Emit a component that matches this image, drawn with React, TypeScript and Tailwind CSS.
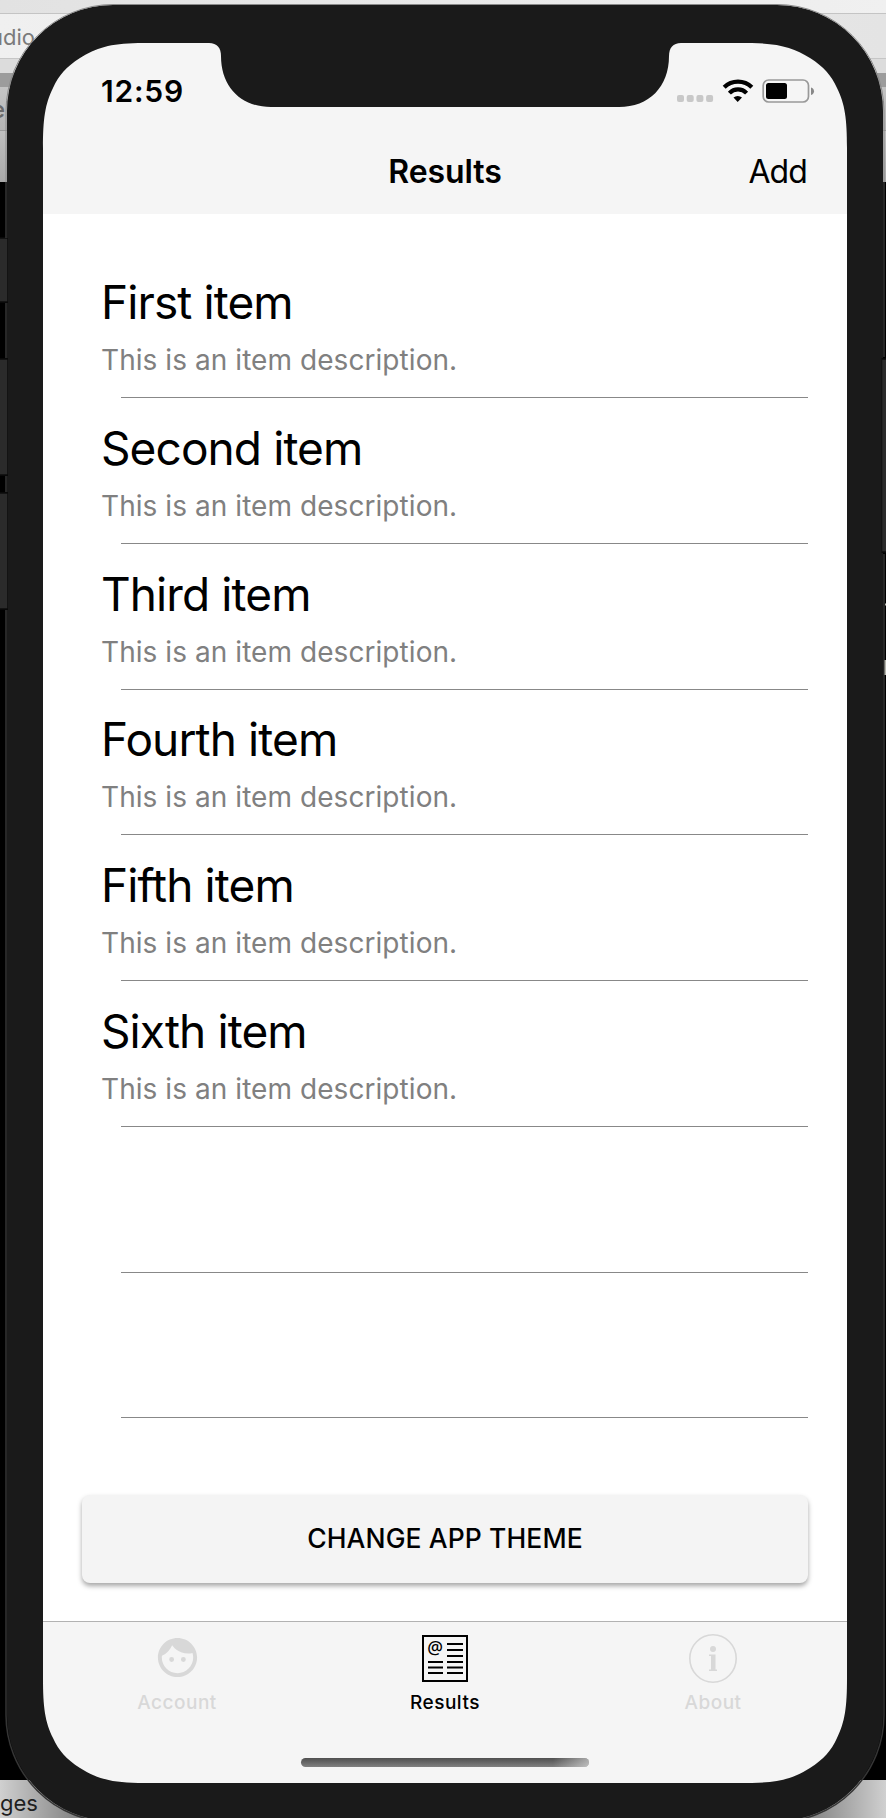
import React from "react";
import { MdFace } from "react-icons/md";

const items = ["First item", "Second item", "Third item", "Fourth item", "Fifth item", "Sixth item", "", ""];

function Desktop() {
  return (
    <div className="absolute inset-0 flex flex-col overflow-hidden bg-black text-[#7b7b7b]">
      <div className="h-[14px] shrink-0 border-b border-[#c4c4c4] bg-linear-to-r from-[#e2e2e2] to-[#f0f0f0]" />
      <div className="flex h-[45px] shrink-0 items-center border-b border-[#c6c6c6] bg-linear-to-r from-[#f0f0f0] to-[#e4e4e4]">
        <span className="-ml-[10px] pt-[2px] text-[22px] leading-none">udio</span>
      </div>
      <div className="h-[14px] shrink-0 bg-[#dcdcdc]" />
      <div className="h-[14px] shrink-0 bg-[#9c9c9c]" />
      <div className="flex h-[44px] shrink-0 items-center border-b border-[#9a9a9a] bg-linear-to-b from-[#c4c4c4] to-[#b5b5b5]">
        <span className="-ml-[9px] pt-[3px] text-[24px] font-medium leading-none text-[#6a6a6a]">e</span>
      </div>
      <div className="h-[51px] shrink-0 bg-linear-to-b from-[#c0c0c0] to-[#a8a8a8]" />
      <div className="grow" />
      <div className="flex h-[38px] shrink-0 items-center justify-between bg-[#777777] text-[#1f1f1f]">
        <div className="flex h-full w-[90px] items-center bg-linear-to-r from-[#d0d0d0] to-[#777777]">
          <span className="pt-[7px] text-[22px] leading-none">ges</span>
        </div>
        <div className="h-full w-[90px] bg-linear-to-l from-[#d0d0d0] to-[#777777]" />
      </div>
    </div>
  );
}

function Bezel() {
  return (
    <svg className="pointer-events-none absolute inset-0" width="886" height="1818" viewBox="0 0 886 1818">
      <g fill="#2b2b2b" stroke="#0c0c0c" strokeWidth="1.5">
        <rect x="-4" y="238" width="12" height="64" />
        <rect x="-4" y="359" width="12" height="116" />
        <rect x="-4" y="493" width="12" height="116" />
        <rect x="881.5" y="359" width="14" height="193" />
      </g>
      <path
        fill="#1a1a1a"
        fillRule="evenodd"
        d="M113 5H777A106 106 0 0 1 883 111V358H881.500V553H883V1715A106 106 0 0 1 777 1821H113A106 106 0 0 1 7 1715V610H8V492H7V476H8V358H7V303H8V238H7V111A106 106 0 0 1 113 5Z
        M138 43C110 43.500 96 48 80 58C66 67 59 75 53 88C45 104 43 119 43 148V1678C43 1707 45 1722 53 1738C59 1751 66 1759 80 1768C96 1778 110 1782.500 138 1783H752C780 1782.500 794 1778 810 1768C824 1759 831 1751 837 1738C845 1722 847 1707 847 1678V148C847 119 845 104 837 88C831 75 824 67 810 58C794 48 780 43.500 752 43H681C673 43 669 48 669 56C669 87 649 107 619 107H271C241 107 221 87 221 56C221 48 217 43 209 43Z"
      />
      <path
        fill="none"
        stroke="#353535"
        strokeWidth="1.5"
        d="M6 238V182M6 303V358M6 476V492M6 610V1715A107 107 0 0 0 113 1822H777A107 107 0 0 0 884 1715V554M884 357V182"
      />
      <path
        fill="none"
        stroke="#8a8a8a"
        strokeWidth="1"
        d="M6 182V111A107 107 0 0 1 113 4.500H777A107 107 0 0 1 884 111V182"
      />
      <path d="M885 604.500H886M885.500 660V675" stroke="#b5b5ac" strokeWidth="2" />
    </svg>
  );
}

function StatusIcons() {
  return (
    <svg width="140" height="28" viewBox="676 77 140 28">
      <g fill="#c8c8c8">
        <rect x="677" y="95" width="7" height="7" rx="2" />
        <rect x="686.700" y="95" width="7" height="7" rx="2" />
        <rect x="696.400" y="95" width="7" height="7" rx="2" />
        <rect x="706.100" y="95" width="7" height="7" rx="2" />
      </g>
      <g fill="none" stroke="#000" strokeWidth="4.2">
        <path d="M724.200 87.300A19.500 19.500 0 0 1 751.800 87.300" />
        <path d="M729.400 93.100A12 12 0 0 1 746.600 93.100" />
      </g>
      <path d="M733.500 97.600A6.500 6.500 0 0 1 742 97.600L737.700 102Z" />
      <rect x="763.200" y="80" width="45.300" height="22" rx="5.500" fill="none" stroke="#999" strokeWidth="1.700" />
      <rect x="766" y="83" width="21" height="16" rx="2.500" />
      <path d="M811 87.500Q814 88.500 814 91.200Q814 94 811 95Z" fill="#888" />
    </svg>
  );
}

function ResultsIcon() {
  return (
    <svg className="-ml-px" width="46" height="47" viewBox="0 0 46 47">
      <rect x="1" y="1" width="44" height="45" fill="none" stroke="#000" strokeWidth="2" />
      <text x="5.300" y="19" fontSize="17.500" fontWeight="500" fontFamily="Noto Sans, sans-serif">@</text>
      <path
        stroke="#000"
        strokeWidth="2"
        d="M25 9H41M25 15H41M25 21H41M6 27H21M25 27H41M6 32.500H21M25 32.500H41M6 38H21M25 38H41"
      />
    </svg>
  );
}

function InfoIcon() {
  return (
    <svg width="48" height="49" viewBox="0 0 48 49" fill="#d8d8d8">
      <ellipse cx="24" cy="24.500" rx="23.200" ry="23.700" fill="none" stroke="#d8d8d8" strokeWidth="1.600" />
      <circle cx="24" cy="15" r="3" />
      <path d="M20 20.500H26.500V35.500H28V37H20V35.500H22V22H20Z" />
    </svg>
  );
}

function Tab({ label, active, children }: { label: string; active?: boolean; children: React.ReactNode }) {
  return (
    <div className={`flex w-[268px] flex-col items-center ${active ? "text-black" : "text-[#d8d8d8]"}`}>
      <div className="flex h-[74px] items-center justify-center pb-[2px]">{children}</div>
      <span className="text-[19px] font-medium leading-[14px] tracking-[0.5px]">{label}</span>
    </div>
  );
}

export default function App() {
  return (
    <div className="relative h-[1818px] w-[886px] overflow-hidden font-[Inter,sans-serif] [font-variant-ligatures:none]">
      <Desktop />
      <div className="relative ml-[42px] flex h-[1784px] w-[806px] flex-col bg-white px-px pt-[43px] text-black [clip-path:inset(42px_0_0_0_round_78px)]">
        <header className="-mx-px flex h-[171px] shrink-0 flex-col bg-[#f5f5f5] px-px">
          <div className="flex h-[86px] items-center justify-between pl-[58px] pr-[31px] pt-[10px]">
            <span className="text-[30px] font-semibold leading-none tracking-[0.8px]">12:59</span>
            <StatusIcons />
          </div>
          <div className="grid h-[85px] grid-cols-3 items-center px-[40px]">
            <span />
            <h1 className="text-center text-[32px] font-semibold leading-none tracking-[-0.1px]">Results</h1>
            <button className="text-right text-[32px] leading-none tracking-[-0.9px]">Add</button>
          </div>
        </header>
        <main className="flex grow flex-col pt-[38.500px]">
          <ul>
            {items.map((title, i) => (
              <li key={i} className="flex h-[145.730px] flex-col justify-end">
                {title && (
                  <div className="pl-[58px]">
                    <h2 className="text-[46px] leading-[56px] tracking-[-0.9px]">{title}</h2>
                    <p className="mt-[13px] text-[28px] leading-[34px] tracking-[0.06px] text-[#808080]">
                      This is an item description.
                    </p>
                  </div>
                )}
                <div className="ml-[78px] mr-[39px] mt-[20px] h-px shrink-0 bg-[#888888]" />
              </li>
            ))}
          </ul>
          <button className="mx-[39px] mt-[77px] h-[88px] shrink-0 rounded-[8px] bg-[#f4f4f4] text-[26.500px] font-medium tracking-[0.1px] shadow-[0_3px_5px_rgba(0,0,0,0.350)]">
            CHANGE APP THEME
          </button>
        </main>
        <nav className="-mx-px flex h-[163px] shrink-0 flex-col border-t border-[#b2b2b2] bg-[#f5f5f5] px-px">
          <div className="flex">
            <Tab label="Account">
              <MdFace size={47} className="-mt-[2px]" />
            </Tab>
            <Tab label="Results" active>
              <ResultsIcon />
            </Tab>
            <Tab label="About">
              <InfoIcon />
            </Tab>
          </div>
          <div className="relative mx-auto mt-[48px] h-[9px] w-[288px] overflow-hidden rounded-full bg-linear-to-b from-[#505050] to-[#808080]">
            <div className="absolute inset-y-0 right-0 w-[36px] bg-linear-to-r from-transparent to-white/50" />
          </div>
        </nav>
      </div>
      <Bezel />
    </div>
  );
}
